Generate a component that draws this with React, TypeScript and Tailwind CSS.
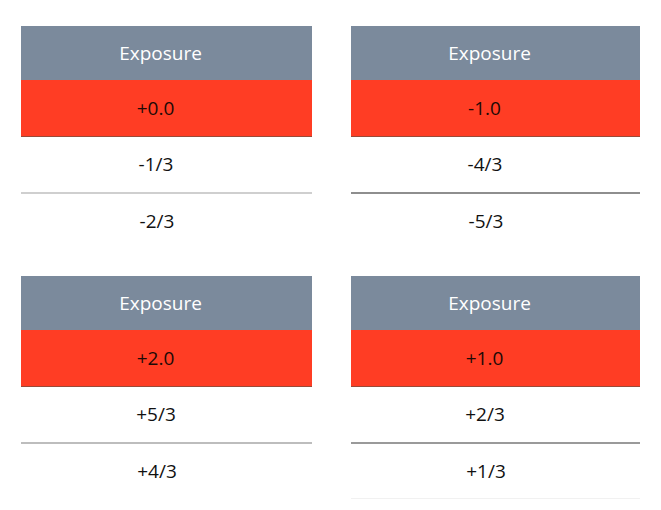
const panels = [
  { selected: "+0.0", rows: ["-1/3", "-2/3"], line: "border-[#cfcfcf]", last: "" },
  { selected: "-1.0", rows: ["-4/3", "-5/3"], line: "border-[#8e8e8e]", last: "" },
  { selected: "+2.0", rows: ["+5/3", "+4/3"], line: "border-[#bdbdbd]", last: "" },
  { selected: "+1.0", rows: ["+2/3", "+1/3"], line: "border-[#9a9a9a]", last: "border-b border-[#f1f1f1]" },
];

function Picker({ selected, rows, line, last }) {
  return (
    <div className="flex flex-col">
      {/* Title bar */}
      <div className="h-[54px] flex items-center justify-center pr-[12px] bg-[#7b8a9c] text-white text-[19px]">
        Exposure
      </div>
      {/* Current value */}
      <div className="h-[57px] flex items-center justify-center pr-[22px] bg-[#ff3d24] border-b border-[#9a4a38] text-[#1c0a06] text-[19px]">
        {selected}
      </div>
      <div className={`h-[57px] flex items-center justify-center pr-[21px] border-b-[2px] ${line} text-[19px] text-[#111]`}>
        {rows[0]}
      </div>
      <div className={`h-[55px] flex items-center justify-center pr-[19px] text-[19px] text-[#111] ${last}`}>
        {rows[1]}
      </div>
    </div>
  );
}

export default function App() {
  return (
    <div
      className="w-[661px] h-[510px] bg-white pl-[21px] pt-[26px]"
      style={{ fontFamily: '"Open Sans", "Noto Sans", sans-serif' }}
    >
      <div className="grid grid-cols-[291px_289px] gap-x-[39px] gap-y-[27px]">
        {panels.map((p, i) => (
          <Picker key={i} {...p} />
        ))}
      </div>
    </div>
  );
}
